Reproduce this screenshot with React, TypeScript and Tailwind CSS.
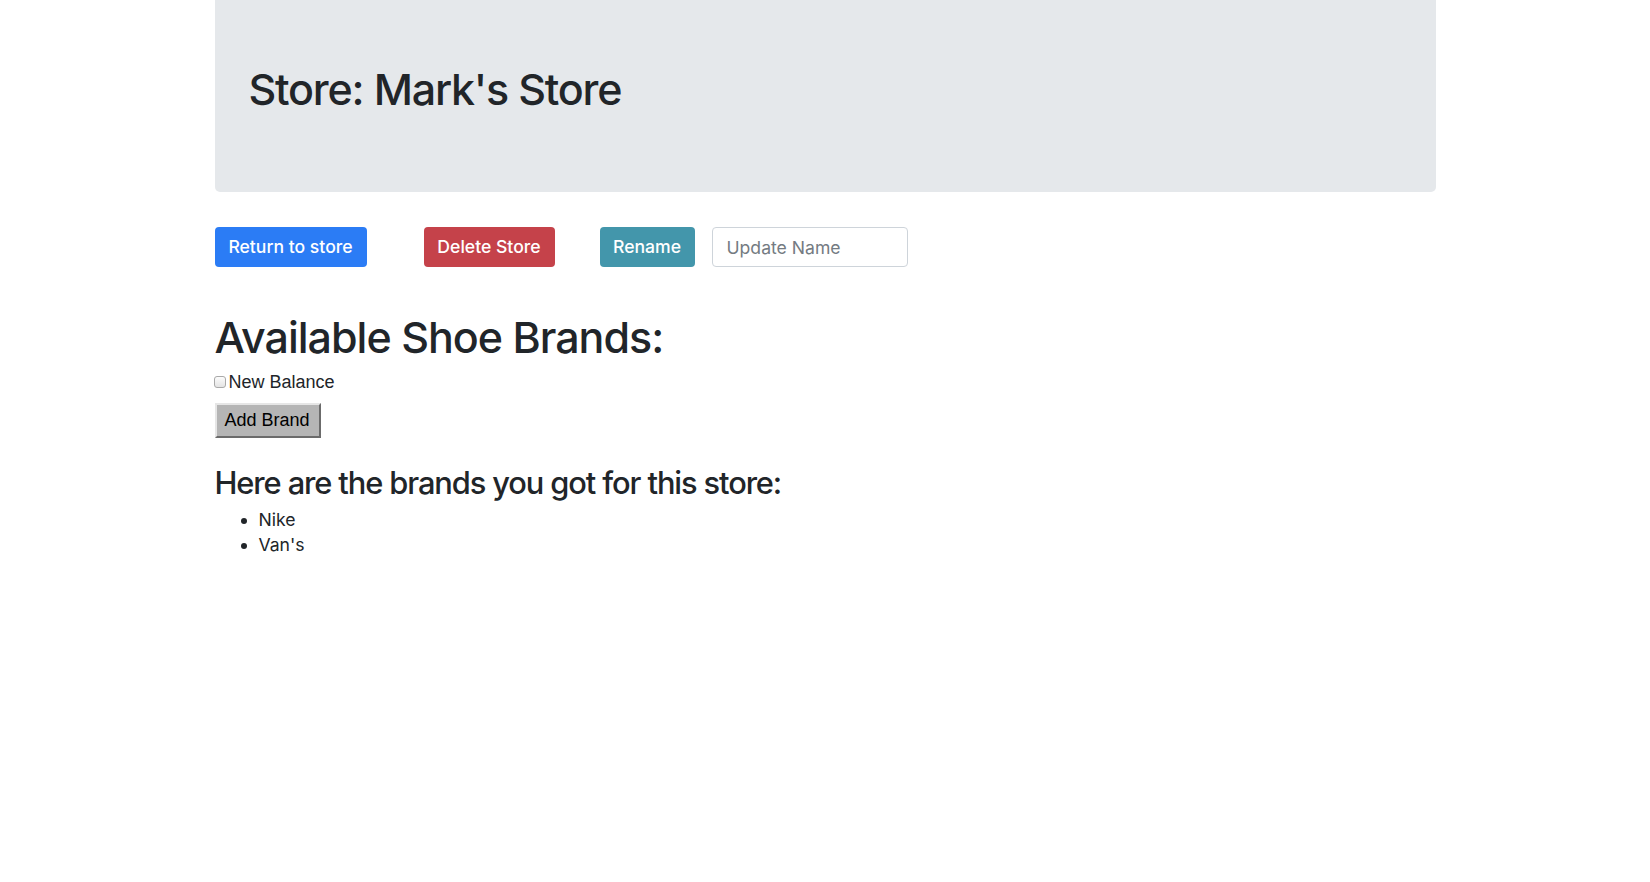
const sans = "font-['Inter','Noto_Sans',sans-serif]";

export default function App() {
  return (
    <div className={`min-h-screen bg-white text-[#212529] ${sans}`}>
      <div className="mx-auto w-[1221px]">
        <div className="h-[192px] rounded-b-[5px] bg-[#e5e8eb] px-[34px] pt-[63px]">
          <h1 className="text-[43px] leading-[53px] font-medium tracking-[-1.2px]">
            Store: Mark's Store
          </h1>
        </div>

        <div className="mt-[35px] flex items-center">
          <button className="h-[40px] w-[152px] rounded-[4px] bg-[#2b7cf5] text-[17.6px] font-medium text-white">
            Return to store
          </button>
          <button className="ml-[57px] h-[40px] w-[131px] rounded-[4px] bg-[#c5424a] text-[17.6px] font-medium text-white">
            Delete Store
          </button>
          <button className="ml-[45px] h-[40px] w-[95px] rounded-[4px] bg-[#4396ab] text-[17.6px] font-medium text-white">
            Rename
          </button>
          <input
            placeholder="Update Name"
            className="ml-[17px] h-[40px] w-[196px] rounded-[4px] border border-[#ced4da] px-[14px] text-[17.6px] placeholder:text-[#747b82] outline-none"
          />
        </div>

        <h1 className="mt-[44px] text-[43px] leading-[53px] font-medium tracking-[-1px]">
          Available Shoe Brands:
        </h1>

        <div className="mt-[5px] flex items-center h-[26px] font-['Liberation_Sans','Arial',sans-serif] text-[18px]">
          <span className="ml-[-1px] mr-[3px] inline-block h-[12px] w-[12px] rounded-[3px] border border-[#a9a9a9] bg-gradient-to-b from-[#fcfcfc] to-[#e4e4e4]" />
          <span>New Balance</span>
        </div>

        <button className="mt-[8px] h-[35px] w-[106px] border-[2px] border-t-[#e6e6e6] border-l-[#e6e6e6] border-b-[#6b6b6b] border-r-[#6b6b6b] bg-[#b5b5b5] text-left pl-[8px] font-['Liberation_Sans','Arial',sans-serif] text-[18px] text-black">
          Add Brand
        </button>

        <h3 className="mt-[26px] text-[30.8px] leading-[37px] font-medium tracking-[-1.1px]">
          Here are the brands you got for this store:
        </h3>

        <ul className="mt-[6px] list-disc pl-[44px] text-[17.6px] leading-[25px]">
          <li>Nike</li>
          <li>Van's</li>
        </ul>
      </div>
    </div>
  );
}
